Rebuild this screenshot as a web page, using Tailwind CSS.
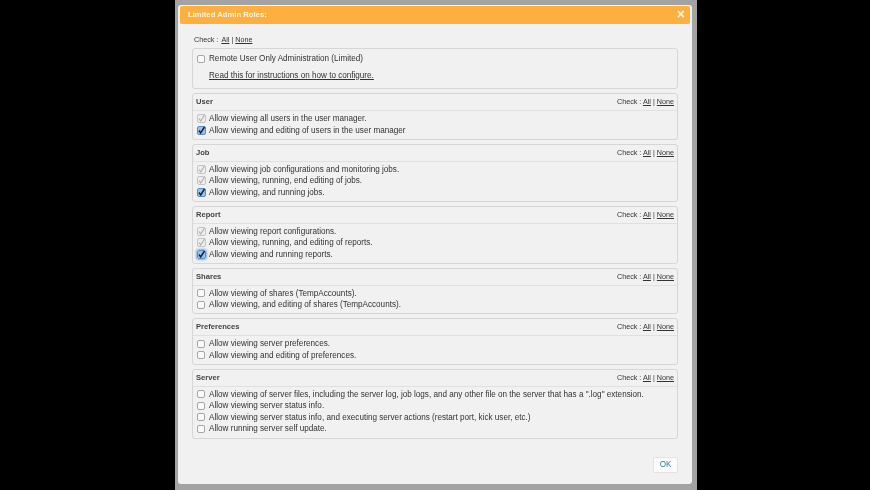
<!DOCTYPE html>
<html>
<head>
<meta charset="utf-8">
<script src="https://cdn.jsdelivr.net/npm/@tailwindcss/browser@4"></script>
</head>
<body class="bg-black font-['Liberation_Sans',sans-serif] text-[8.15px] leading-[11.5px] text-[#333]">
<div class="w-[870px] h-[490px] overflow-hidden flex justify-start">
  <div class="ml-[175px] w-[522px] h-[490px] bg-[#a3a3a3] pl-[3px] pr-[5px] pt-[5px] blur-[0.3px]">
    <div class="w-[514px] h-[479px] bg-[#f1f1f1] rounded-[3px] pt-[1px] px-[2px] flex flex-col">
      <div class="h-[18px] bg-[#fbb040] rounded-[2px] flex items-center justify-between pl-[8px] pr-[5px] text-[#fdf3df] font-bold text-[7.7px]">
        <span>Limited Admin Roles:</span>
        <span class="text-[14px] text-[#fdf3df]">×</span>
      </div>
      <div class="px-[12px] flex flex-col flex-1">
        <div class="mt-[9px] h-[14px] ml-[2px] flex items-center text-[7.2px]">Check : <a class="underline ml-[3px]">All</a><span class="mx-[2px]">|</span><a class="underline">None</a></div>

        <div class="mt-[1px] h-[41px] border border-[#d6d6d6] rounded-[3px] pl-[4px] pt-[4px]">
          <label class="flex items-center h-[11.5px]">
            <span class="w-[8px] h-[8px] mr-[4px] border border-[#a5a5a5] rounded-[2px] bg-[#fafafa]"></span>Remote User Only Administration (Limited)
          </label>
          <div class="mt-[5px] ml-[12px] h-[11.5px] underline">Read this for instructions on how to configure.</div>
        </div>

        <!-- User -->
        <div class="mt-[4px] border border-[#d6d6d6] rounded-[3px]">
          <div class="h-[17px] px-[3px] flex items-center justify-between border-b border-[#e0e0e0] rounded-t-[3px]"><span class="font-bold text-[#444] text-[7.6px]">User</span><span class="text-[7.2px]">Check : <a class="underline">All</a> | <a class="underline">None</a></span></div>
          <div class="pt-[2px] pb-[2.5px] px-[4px] flex flex-col">
            <div class="flex items-center h-[11.5px]"><svg class="mr-[3px]" width="9" height="9" viewBox="0 0 9 9"><rect x=".5" y=".5" width="8" height="8" rx="1.5" fill="#eee" stroke="#c4c4c4"/><path d="M2 4.5 3.7 7 7.5 1" fill="none" stroke="#b0b0b0" stroke-width="1.2"/></svg>Allow viewing all users in the user manager.</div>
            <div class="flex items-center h-[11.5px]"><svg class="mr-[3px]" width="9" height="9" viewBox="0 0 9 9"><rect x=".5" y=".5" width="8" height="8" rx="1.5" fill="#9cc0e6" stroke="#5c8dc0"/><path d="M2 4.5 3.7 7 7.5 1" fill="none" stroke="#15233a" stroke-width="1.5"/></svg>Allow viewing and editing of users in the user manager</div>
          </div>
        </div>

        <!-- Job -->
        <div class="mt-[4px] border border-[#d6d6d6] rounded-[3px]">
          <div class="h-[17px] px-[3px] flex items-center justify-between border-b border-[#e0e0e0] rounded-t-[3px]"><span class="font-bold text-[#444] text-[7.6px]">Job</span><span class="text-[7.2px]">Check : <a class="underline">All</a> | <a class="underline">None</a></span></div>
          <div class="pt-[2px] pb-[2.5px] px-[4px] flex flex-col">
            <div class="flex items-center h-[11.5px]"><svg class="mr-[3px]" width="9" height="9" viewBox="0 0 9 9"><rect x=".5" y=".5" width="8" height="8" rx="1.5" fill="#eee" stroke="#c4c4c4"/><path d="M2 4.5 3.7 7 7.5 1" fill="none" stroke="#b0b0b0" stroke-width="1.2"/></svg>Allow viewing job configurations and monitoring jobs.</div>
            <div class="flex items-center h-[11.5px]"><svg class="mr-[3px]" width="9" height="9" viewBox="0 0 9 9"><rect x=".5" y=".5" width="8" height="8" rx="1.5" fill="#eee" stroke="#c4c4c4"/><path d="M2 4.5 3.7 7 7.5 1" fill="none" stroke="#b0b0b0" stroke-width="1.2"/></svg>Allow viewing, running, end editing of jobs.</div>
            <div class="flex items-center h-[11.5px]"><svg class="mr-[3px]" width="9" height="9" viewBox="0 0 9 9"><rect x=".5" y=".5" width="8" height="8" rx="1.5" fill="#9cc0e6" stroke="#5c8dc0"/><path d="M2 4.5 3.7 7 7.5 1" fill="none" stroke="#15233a" stroke-width="1.5"/></svg>Allow viewing, and running jobs.</div>
          </div>
        </div>

        <!-- Report -->
        <div class="mt-[4px] border border-[#d6d6d6] rounded-[3px]">
          <div class="h-[17px] px-[3px] flex items-center justify-between border-b border-[#e0e0e0] rounded-t-[3px]"><span class="font-bold text-[#444] text-[7.6px]">Report</span><span class="text-[7.2px]">Check : <a class="underline">All</a> | <a class="underline">None</a></span></div>
          <div class="pt-[2px] pb-[2.5px] px-[4px] flex flex-col">
            <div class="flex items-center h-[11.5px]"><svg class="mr-[3px]" width="9" height="9" viewBox="0 0 9 9"><rect x=".5" y=".5" width="8" height="8" rx="1.5" fill="#eee" stroke="#c4c4c4"/><path d="M2 4.5 3.7 7 7.5 1" fill="none" stroke="#b0b0b0" stroke-width="1.2"/></svg>Allow viewing report configurations.</div>
            <div class="flex items-center h-[11.5px]"><svg class="mr-[3px]" width="9" height="9" viewBox="0 0 9 9"><rect x=".5" y=".5" width="8" height="8" rx="1.5" fill="#eee" stroke="#c4c4c4"/><path d="M2 4.5 3.7 7 7.5 1" fill="none" stroke="#b0b0b0" stroke-width="1.2"/></svg>Allow viewing, running, and editing of reports.</div>
            <div class="flex items-center h-[11.5px]"><svg class="mr-[3px] rounded-[2px] shadow-[0_0_2px_1px_#7fb0e0]" width="9" height="9" viewBox="0 0 9 9"><rect x=".5" y=".5" width="8" height="8" rx="1.5" fill="#9cc0e6" stroke="#5c8dc0"/><path d="M2 4.5 3.7 7 7.5 1" fill="none" stroke="#15233a" stroke-width="1.5"/></svg>Allow viewing and running reports.</div>
          </div>
        </div>

        <!-- Shares -->
        <div class="mt-[4px] border border-[#d6d6d6] rounded-[3px]">
          <div class="h-[17px] px-[3px] flex items-center justify-between border-b border-[#e0e0e0] rounded-t-[3px]"><span class="font-bold text-[#444] text-[7.6px]">Shares</span><span class="text-[7.2px]">Check : <a class="underline">All</a> | <a class="underline">None</a></span></div>
          <div class="pt-[2px] pb-[2.5px] px-[4px] flex flex-col">
            <div class="flex items-center h-[11.5px]"><span class="w-[8px] h-[8px] mr-[4px] border border-[#a5a5a5] rounded-[2px] bg-[#fafafa]"></span>Allow viewing of shares (TempAccounts).</div>
            <div class="flex items-center h-[11.5px]"><span class="w-[8px] h-[8px] mr-[4px] border border-[#a5a5a5] rounded-[2px] bg-[#fafafa]"></span>Allow viewing, and editing of shares (TempAccounts).</div>
          </div>
        </div>

        <!-- Preferences -->
        <div class="mt-[4px] border border-[#d6d6d6] rounded-[3px]">
          <div class="h-[17px] px-[3px] flex items-center justify-between border-b border-[#e0e0e0] rounded-t-[3px]"><span class="font-bold text-[#444] text-[7.6px]">Preferences</span><span class="text-[7.2px]">Check : <a class="underline">All</a> | <a class="underline">None</a></span></div>
          <div class="pt-[2px] pb-[2.5px] px-[4px] flex flex-col">
            <div class="flex items-center h-[11.5px]"><span class="w-[8px] h-[8px] mr-[4px] border border-[#a5a5a5] rounded-[2px] bg-[#fafafa]"></span>Allow viewing server preferences.</div>
            <div class="flex items-center h-[11.5px]"><span class="w-[8px] h-[8px] mr-[4px] border border-[#a5a5a5] rounded-[2px] bg-[#fafafa]"></span>Allow viewing and editing of preferences.</div>
          </div>
        </div>

        <!-- Server -->
        <div class="mt-[4px] border border-[#d6d6d6] rounded-[3px]">
          <div class="h-[17px] px-[3px] flex items-center justify-between border-b border-[#e0e0e0] rounded-t-[3px]"><span class="font-bold text-[#444] text-[7.6px]">Server</span><span class="text-[7.2px]">Check : <a class="underline">All</a> | <a class="underline">None</a></span></div>
          <div class="pt-[2px] pb-[3.5px] px-[4px] flex flex-col">
            <div class="flex items-center h-[11.5px]"><span class="w-[8px] h-[8px] mr-[4px] border border-[#a5a5a5] rounded-[2px] bg-[#fafafa]"></span>Allow viewing of server files, including the server log, job logs, and any other file on the server that has a ".log" extension.</div>
            <div class="flex items-center h-[11.5px]"><span class="w-[8px] h-[8px] mr-[4px] border border-[#a5a5a5] rounded-[2px] bg-[#fafafa]"></span>Allow viewing server status info.</div>
            <div class="flex items-center h-[11.5px]"><span class="w-[8px] h-[8px] mr-[4px] border border-[#a5a5a5] rounded-[2px] bg-[#fafafa]"></span>Allow viewing server status info, and executing server actions (restart port, kick user, etc.)</div>
            <div class="flex items-center h-[11.5px]"><span class="w-[8px] h-[8px] mr-[4px] border border-[#a5a5a5] rounded-[2px] bg-[#fafafa]"></span>Allow running server self update.</div>
          </div>
        </div>

        <div class="mt-[18px] flex justify-end">
          <button class="w-[25px] h-[16px] bg-white/70 border border-[#e2e2e2] rounded-[2px] text-[#2f7f8f]">OK</button>
        </div>
      </div>
    </div>
  </div>
</div>
</body>
</html>
